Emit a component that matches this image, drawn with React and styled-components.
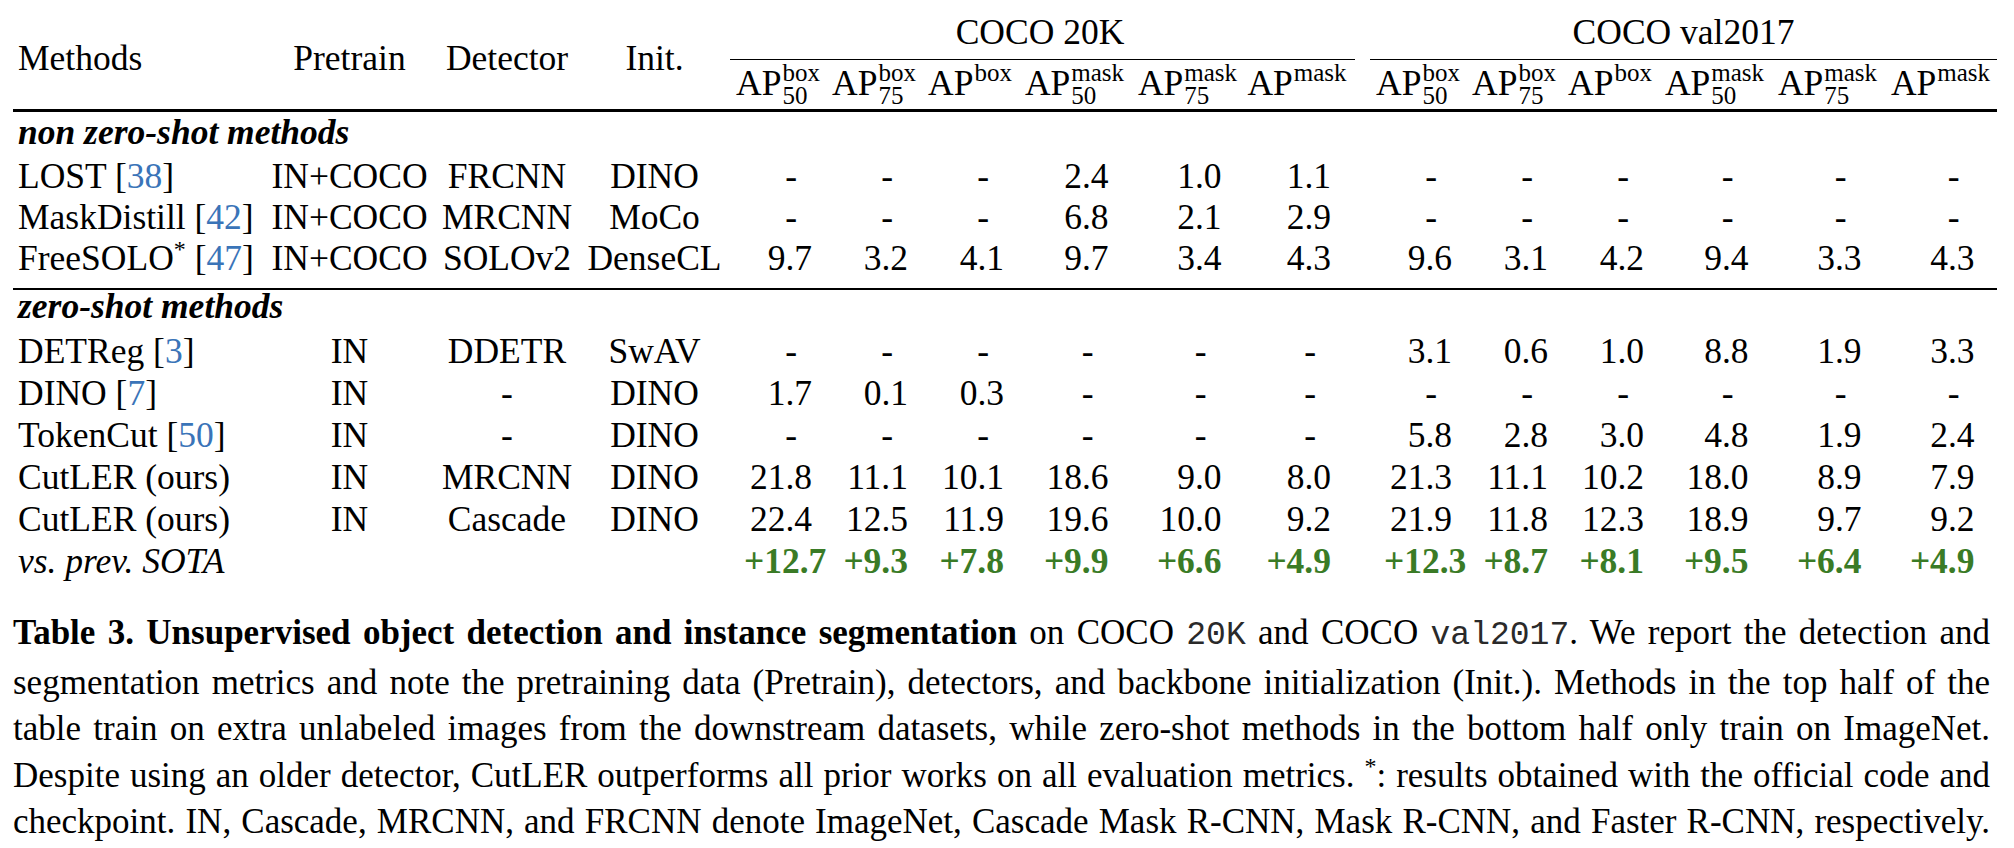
import React from 'react';
import styled, { createGlobalStyle } from 'styled-components';

const Global = createGlobalStyle`
  html, body { margin: 0; padding: 0; background: #fff; }
  body { font-family: "Liberation Serif", "Times New Roman", serif; color: #000; }
`;

const COLS =
  '251px 171px 144px 151px 96px 96px 96px 113px 113px 106px 20px 96px 96px 96px 113px 113px 113px';

const Page = styled.div`
  width: 2014px;
  height: 848px;
  box-sizing: border-box;
  padding-left: 13px;
  overflow: hidden;
`;

const Table = styled.div`
  width: 1984px;
  font-size: 35.5px;
`;

const Header = styled.div`
  display: grid;
  grid-template-columns: ${COLS};
  grid-template-rows: 60px 49px;
  line-height: 40px;
`;

const HeadLabel = styled.div`
  grid-row: 1 / span 2;
  grid-column: ${(p) => p.$col};
  padding-top: 38px;
  padding-left: ${(p) => (p.$left ? '5px' : '0')};
  text-align: ${(p) => (p.$left ? 'left' : 'center')};
  white-space: nowrap;
`;

const Group = styled.div`
  grid-row: 1;
  grid-column: ${(p) => p.$col};
  display: flex;
  flex-direction: column;
  padding-top: 12px;
`;

const GroupTitle = styled.div`
  text-align: center;
  white-space: nowrap;
`;

const GroupRule = styled.div`
  margin-top: auto;
  height: 1.5px;
  width: calc(100% + ${(p) => p.$extend || 0}px);
  background: #000;
`;

const ApCell = styled.div`
  grid-row: 2;
  grid-column: ${(p) => p.$col};
  padding-top: 1px;
  text-align: center;
  white-space: nowrap;
`;

const Scripts = styled.span`
  display: inline-flex;
  flex-direction: column;
  font-size: 25px;
  line-height: 23px;
  vertical-align: 14px;
  margin-left: 1px;
  text-align: left;
`;

const Rule = styled.div`
  height: ${(p) => p.$w}px;
  margin-top: ${(p) => p.$mt || 0}px;
  background: #000;
`;

const Row = styled.div`
  display: grid;
  grid-template-columns: ${COLS};
  height: ${(p) => p.$h || 41}px;
  line-height: ${(p) => p.$lh || 40}px;
`;

const SectionLabel = styled.div`
  grid-column: 1 / -1;
  padding-left: 5px;
  font-weight: 700;
  font-style: italic;
  white-space: nowrap;
`;

const MethodCell = styled.div`
  padding-left: 5px;
  white-space: nowrap;
  font-style: ${(p) => (p.$italic ? 'italic' : 'normal')};
`;

const CenterCell = styled.div`
  text-align: center;
  white-space: nowrap;
`;

const NumCell = styled.div`
  display: flex;
  justify-content: center;
`;

const NumBox = styled.span`
  display: inline-block;
  box-sizing: border-box;
  width: 68px;
  text-align: right;
  white-space: nowrap;
  padding-right: ${(p) => (p.$dash ? '15px' : '0')};
  color: ${(p) => (p.$gain ? '#3a7b26' : '#000')};
  font-weight: ${(p) => (p.$gain ? 700 : 400)};
`;

const Cite = styled.span`
  color: #3a74b8;
`;

const Star = styled.span`
  font-size: 24px;
  vertical-align: 13px;
  line-height: 0;
`;

const Caption = styled.div`
  width: 1977px;
  margin-top: 27px;
  font-size: 35px;
  line-height: 46.5px;
`;

const CapLine = styled.div`
  text-align: justify;
  text-align-last: justify;
  white-space: nowrap;
`;

const Mono = styled.span`
  font-family: "Liberation Mono", "DejaVu Sans Mono", monospace;
  font-size: 33px;
  color: #2a2a2a;
`;

const Spacer = styled.div``;

const AP = ({ sup, sub }) => (
  <>
    AP
    <Scripts>
      <span>{sup}</span>
      {sub ? <span>{sub}</span> : null}
    </Scripts>
  </>
);

const HEADS = [
  ['box', '50'],
  ['box', '75'],
  ['box', null],
  ['mask', '50'],
  ['mask', '75'],
  ['mask', null],
];

const D = ['-', '-', '-', '-', '-', '-'];

const TOP = [
  { m: 'LOST', cite: '38', pre: 'IN+COCO', det: 'FRCNN', init: 'DINO', a: ['-', '-', '-', '2.4', '1.0', '1.1'], b: D },
  { m: 'MaskDistill', cite: '42', pre: 'IN+COCO', det: 'MRCNN', init: 'MoCo', a: ['-', '-', '-', '6.8', '2.1', '2.9'], b: D },
  {
    m: 'FreeSOLO',
    star: true,
    cite: '47',
    pre: 'IN+COCO',
    det: 'SOLOv2',
    init: 'DenseCL',
    a: ['9.7', '3.2', '4.1', '9.7', '3.4', '4.3'],
    b: ['9.6', '3.1', '4.2', '9.4', '3.3', '4.3'],
  },
];

const BOTTOM = [
  { m: 'DETReg', cite: '3', pre: 'IN', det: 'DDETR', init: 'SwAV', a: D, b: ['3.1', '0.6', '1.0', '8.8', '1.9', '3.3'] },
  { m: 'DINO', cite: '7', pre: 'IN', det: '-', init: 'DINO', a: ['1.7', '0.1', '0.3', '-', '-', '-'], b: D },
  { m: 'TokenCut', cite: '50', pre: 'IN', det: '-', init: 'DINO', a: D, b: ['5.8', '2.8', '3.0', '4.8', '1.9', '2.4'] },
  {
    m: 'CutLER (ours)',
    pre: 'IN',
    det: 'MRCNN',
    init: 'DINO',
    a: ['21.8', '11.1', '10.1', '18.6', '9.0', '8.0'],
    b: ['21.3', '11.1', '10.2', '18.0', '8.9', '7.9'],
  },
  {
    m: 'CutLER (ours)',
    pre: 'IN',
    det: 'Cascade',
    init: 'DINO',
    a: ['22.4', '12.5', '11.9', '19.6', '10.0', '9.2'],
    b: ['21.9', '11.8', '12.3', '18.9', '9.7', '9.2'],
  },
];

const GAIN = {
  a: ['+12.7', '+9.3', '+7.8', '+9.9', '+6.6', '+4.9'],
  b: ['+12.3', '+8.7', '+8.1', '+9.5', '+6.4', '+4.9'],
};

const Nums = ({ values, gain }) =>
  values.map((v, i) => (
    <NumCell key={i}>
      <NumBox $dash={v === '-'} $gain={gain}>
        {v}
      </NumBox>
    </NumCell>
  ));

const DataRow = ({ r, h }) => (
  <Row $h={h}>
    <MethodCell>
      {r.m}
      {r.star ? <Star>*</Star> : null}
      {r.cite ? (
        <>
          {' '}[<Cite>{r.cite}</Cite>]
        </>
      ) : null}
    </MethodCell>
    <CenterCell>{r.pre}</CenterCell>
    <CenterCell>{r.det}</CenterCell>
    <CenterCell>{r.init}</CenterCell>
    <Nums values={r.a} />
    <Spacer />
    <Nums values={r.b} />
  </Row>
);

export default function App() {
  return (
    <Page>
      <Global />
      <Table>
        <Header>
          <HeadLabel $left $col={1}>Methods</HeadLabel>
          <HeadLabel $col={2}>Pretrain</HeadLabel>
          <HeadLabel $col={3}>Detector</HeadLabel>
          <HeadLabel $col={4}>Init.</HeadLabel>
          <Group $col="5 / span 6">
            <GroupTitle>COCO 20K</GroupTitle>
            <GroupRule $extend={5} />
          </Group>
          <Group $col="12 / span 6">
            <GroupTitle>COCO val2017</GroupTitle>
            <GroupRule />
          </Group>
          {HEADS.map(([sup, sub], i) => (
            <ApCell key={'a' + i} $col={5 + i}>
              <AP sup={sup} sub={sub} />
            </ApCell>
          ))}
          {HEADS.map(([sup, sub], i) => (
            <ApCell key={'b' + i} $col={12 + i}>
              <AP sup={sup} sub={sub} />
            </ApCell>
          ))}
        </Header>
        <Rule $w={3} />
        <Row $h={44}>
          <SectionLabel>non zero-shot methods</SectionLabel>
        </Row>
        {TOP.map((r, i) => (
          <DataRow key={i} r={r} h={i === TOP.length - 1 ? 40 : 41} />
        ))}
        <Rule $w={2} $mt={10} />
        <Row $h={41} $lh={32}>
          <SectionLabel>zero-shot methods</SectionLabel>
        </Row>
        {BOTTOM.map((r, i) => (
          <DataRow key={i} r={r} h={42} />
        ))}
        <Row $h={42}>
          <MethodCell $italic>vs. prev. SOTA</MethodCell>
          <CenterCell />
          <CenterCell />
          <CenterCell />
          <Nums values={GAIN.a} gain />
          <Spacer />
          <Nums values={GAIN.b} gain />
        </Row>
      </Table>
      <Caption>
        <CapLine>
          <b>Table 3. Unsupervised object detection and instance segmentation</b> on COCO <Mono>20K</Mono> and COCO{' '}
          <Mono>val2017</Mono>. We report the detection and
        </CapLine>
        <CapLine>
          segmentation metrics and note the pretraining data (Pretrain), detectors, and backbone initialization (Init.).
          Methods in the top half of the
        </CapLine>
        <CapLine>
          table train on extra unlabeled images from the downstream datasets, while zero-shot methods in the bottom half
          only train on ImageNet.
        </CapLine>
        <CapLine>
          Despite using an older detector, CutLER outperforms all prior works on all evaluation metrics. <Star>*</Star>:
          results obtained with the official code and
        </CapLine>
        <CapLine>
          checkpoint. IN, Cascade, MRCNN, and FRCNN denote ImageNet, Cascade Mask R-CNN, Mask R-CNN, and Faster R-CNN,
          respectively.
        </CapLine>
      </Caption>
    </Page>
  );
}
